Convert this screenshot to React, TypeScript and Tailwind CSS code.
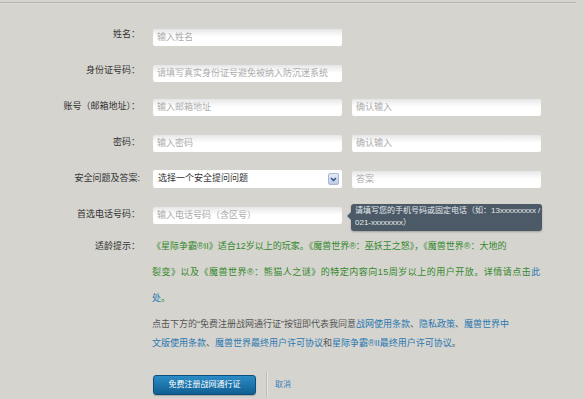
import React from 'react';

const FONT = "font-['Liberation_Sans','Noto_Sans_CJK_SC',sans-serif]";

const inputCls =
  'w-[191px] h-[20px] rounded-[3px] border border-[#d6d5d0] bg-gradient-to-b from-[#e4e4e4] via-white to-white shadow-[inset_0_1px_1px_rgba(0,0,0,0.08)] pl-[4px] text-[9px] text-[#333] outline-none placeholder:text-[#acacac]';

function Label({ children }: { children: React.ReactNode }) {
  return <div className="w-[140px] shrink-0 text-right text-[9px] text-[#333]">{children}</div>;
}

function Field({ placeholder }: { placeholder: string }) {
  return <input className={inputCls} placeholder={placeholder} />;
}

function Link({ children }: { children: React.ReactNode }) {
  return <span className="text-[#2a78b0]">{children}</span>;
}

export default function App() {
  return (
    <div className={`w-[584px] h-[399px] overflow-hidden bg-[#d5d4cf] ${FONT}`}>
      {/* top rule */}
      <div className="mt-[2px] w-[576px] h-[2px] border-t border-[#b3b2ad] border-b border-b-[#dcdbd6]" />

      <div className="pt-[21px] flex flex-col gap-[16px]">
        <div className="flex items-center h-[20px]">
          <Label>姓名：</Label>
          <div className="ml-[12px]"><Field placeholder="输入姓名" /></div>
        </div>
        <div className="flex items-center h-[20px]">
          <Label>身份证号码：</Label>
          <div className="ml-[12px]"><Field placeholder="请填写真实身份证号避免被纳入防沉迷系统" /></div>
        </div>
        <div className="flex items-center h-[20px]">
          <Label>账号（邮箱地址）：</Label>
          <div className="ml-[12px] flex gap-[8px]">
            <Field placeholder="输入邮箱地址" />
            <Field placeholder="确认输入" />
          </div>
        </div>
        <div className="flex items-center h-[20px]">
          <Label>密码：</Label>
          <div className="ml-[12px] flex gap-[8px]">
            <Field placeholder="输入密码" />
            <Field placeholder="确认输入" />
          </div>
        </div>
        <div className="flex items-center h-[20px]">
          <Label>安全问题及答案:</Label>
          <div className="ml-[12px] flex gap-[8px]">
            <div className="w-[191px] h-[20px] rounded-[3px] border border-[#d6d5d0] bg-white flex items-center justify-between pl-[5px] pr-[3px]">
              <span className="text-[9px] text-[#333]">选择一个安全提问问题</span>
              <span className="w-[11px] h-[12px] rounded-[2px] border border-[#a7b8d4] bg-gradient-to-b from-[#e6ecf6] to-[#bccbe3] flex items-center justify-center">
                <svg width="7" height="5" viewBox="0 0 7 5">
                  <path d="M1 1 L3.5 3.5 L6 1" fill="none" stroke="#2c4a7e" strokeWidth="1.4" />
                </svg>
              </span>
            </div>
            <Field placeholder="答案" />
          </div>
        </div>
        <div className="flex items-center h-[20px]">
          <Label>首选电话号码：</Label>
          <div className="ml-[12px] flex gap-[8px]">
            <Field placeholder="输入电话号码（含区号）" />
            <div className="relative w-[191px] h-[20px]">
              <div className="absolute -top-[1px] left-0 w-[191px] h-[27px] rounded-[3px] bg-[#4b5a66] shadow-[0_1px_2px_rgba(0,0,0,0.25)] pl-[4px] pt-[1px] text-[8px] leading-[12px] text-[#e4e9ed] whitespace-nowrap">
                请填写您的手机号码或固定电话（如：13xxxxxxxxx /
                <br />
                021-xxxxxxxx）
                <span className="absolute left-[-4px] top-[8px] w-0 h-0 border-y-[4px] border-y-transparent border-r-[4px] border-r-[#4b5a66]" />
              </div>
            </div>
          </div>
        </div>
      </div>

      <div className="mt-[8px] flex items-start">
        <div className="w-[140px] shrink-0 text-right text-[9px] leading-[26px] text-[#333]">适龄提示：</div>
        <div className="ml-[12px] text-[9px] leading-[26px] text-[#34892c]">
          《星际争霸®II》适合12岁以上的玩家。《魔兽世界®：巫妖王之怒》，《魔兽世界®：大地的
          <br />
          <span className="tracking-[0.5px]">
            裂变》以及《魔兽世界®：熊猫人之谜》的特定内容向15周岁以上的用户开放。详情请点击<Link>此</Link>
          </span>
          <br />
          <Link>处</Link>。
        </div>
      </div>

      <div className="mt-[4px] ml-[152px] text-[9px] leading-[19px] text-[#555]">
        点击下方的“免费注册战网通行证”按钮即代表我同意<Link>战网使用条款</Link>、<Link>隐私政策</Link>、<Link>魔兽世界中</Link>
        <br />
        <Link>文版使用条款</Link>、<Link>魔兽世界最终用户许可协议</Link>和<Link>星际争霸®II最终用户许可协议</Link>。
      </div>

      <div className="mt-[19px] ml-[153px] flex items-center">
        <button className="w-[103px] h-[20px] rounded-[3px] border border-[#0d4f7c] bg-gradient-to-b from-[#2b8cc6] to-[#105f93] text-[8px] text-white shadow-[0_1px_1px_rgba(0,0,0,0.2)]">
          免费注册战网通行证
        </button>
        <div className="ml-[10px] w-px h-[26px] bg-[#bdbcb7] shadow-[1px_0_0_#e6e5e0]" />
        <span className="ml-[8px] text-[8px] text-[#3a80b5]">取消</span>
      </div>
    </div>
  );
}
